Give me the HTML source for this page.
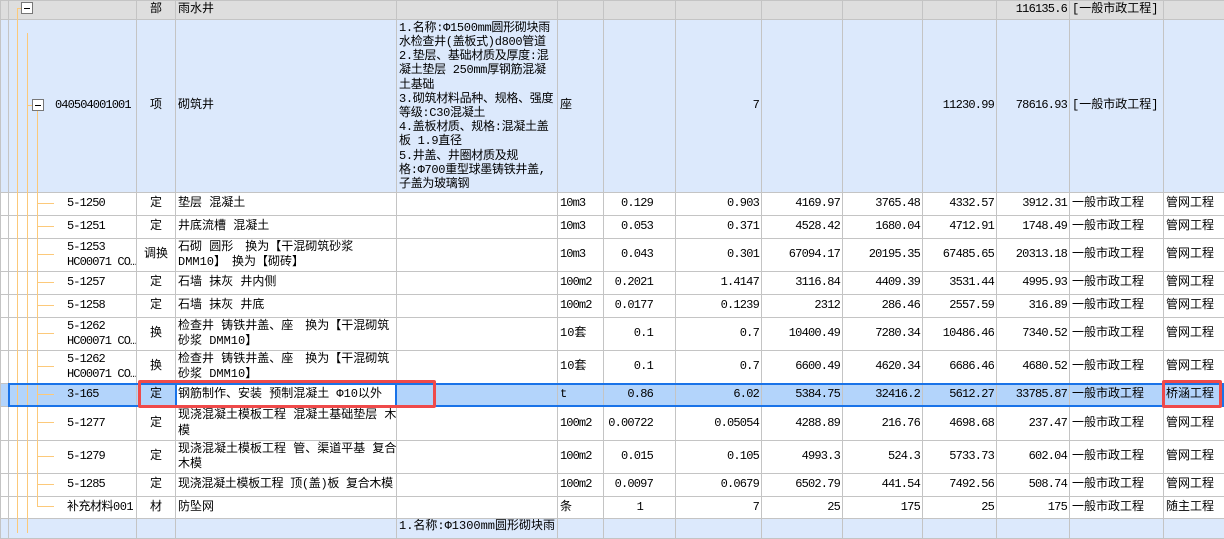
<!DOCTYPE html>
<html><head><meta charset="utf-8"><style>
*{margin:0;padding:0;box-sizing:border-box}
body{width:1224px;height:533px;overflow:hidden;background:#fff;font-family:"Liberation Mono","Noto Sans CJK SC",monospace;font-size:12px;color:#000;position:relative}
table{border-collapse:collapse;table-layout:fixed;position:absolute;left:0;top:0;width:1224px}
td{border:1px solid #c4c4c4;padding:0 2px;line-height:15.5px;vertical-align:middle;overflow:hidden;white-space:nowrap}
.r{text-align:right;letter-spacing:-0.8px}.c{text-align:center}
.k{letter-spacing:-0.9px}
.hd td{background:#dedede}
.bl td{background:#dce9fc}
.sel td{background:#b3d4fb}
.ov{position:absolute;pointer-events:none}
.p{padding-right:22px}
</style></head><body>
<table>
<colgroup><col style="width:8px"><col style="width:128px"><col style="width:39px"><col style="width:221px"><col style="width:161px"><col style="width:46px"><col style="width:72px"><col style="width:86px"><col style="width:81px"><col style="width:80px"><col style="width:74px"><col style="width:73px"><col style="width:94px"><col style="width:61px"></colgroup>
<tr class="hd" style="height:19px"><td></td><td></td><td class="c">部</td><td>雨水井</td><td></td><td></td><td></td><td></td><td></td><td></td><td></td><td class="r">116135.6</td><td>[一般市政工程]</td><td></td></tr>
<tr class="bl" style="height:173px"><td></td><td class="k" style="padding-left:46px">040504001001</td><td class="c">项</td><td>砌筑井</td><td style="line-height:14.2px;letter-spacing:-0.3px">1.名称:Φ1500mm圆形砌块雨<br>水检查井(盖板式)d800管道<br>2.垫层、基础材质及厚度:混<br>凝土垫层 250mm厚钢筋混凝<br>土基础<br>3.砌筑材料品种、规格、强度<br>等级:C30混凝土<br>4.盖板材质、规格:混凝土盖<br>板 1.9直径<br>5.井盖、井圈材质及规<br>格:Φ700重型球墨铸铁井盖,<br>子盖为玻璃钢</td><td>座</td><td></td><td class="r">7</td><td></td><td></td><td class="r">11230.99</td><td class="r">78616.93</td><td>[一般市政工程]</td><td></td></tr>
<tr style="height:23px"><td></td><td class="k" style="padding-left:58px">5-1250</td><td class="c">定</td><td>垫层 混凝土</td><td></td><td class="k">10m3</td><td class="r p">0.129</td><td class="r">0.903</td><td class="r">4169.97</td><td class="r">3765.48</td><td class="r">4332.57</td><td class="r">3912.31</td><td>一般市政工程</td><td>管网工程</td></tr>
<tr style="height:23px"><td></td><td class="k" style="padding-left:58px">5-1251</td><td class="c">定</td><td>井底流槽 混凝土</td><td></td><td class="k">10m3</td><td class="r p">0.053</td><td class="r">0.371</td><td class="r">4528.42</td><td class="r">1680.04</td><td class="r">4712.91</td><td class="r">1748.49</td><td>一般市政工程</td><td>管网工程</td></tr>
<tr style="height:33px"><td></td><td class="k" style="padding-left:58px">5-1253<br>HC00071 CO…</td><td class="c">调换</td><td>石砌 圆形　换为【干混砌筑砂浆<br>DMM10】　换为【砌砖】</td><td></td><td class="k">10m3</td><td class="r p">0.043</td><td class="r">0.301</td><td class="r">67094.17</td><td class="r">20195.35</td><td class="r">67485.65</td><td class="r">20313.18</td><td>一般市政工程</td><td>管网工程</td></tr>
<tr style="height:23px"><td></td><td class="k" style="padding-left:58px">5-1257</td><td class="c">定</td><td>石墙 抹灰 井内侧</td><td></td><td class="k">100m2</td><td class="r p">0.2021</td><td class="r">1.4147</td><td class="r">3116.84</td><td class="r">4409.39</td><td class="r">3531.44</td><td class="r">4995.93</td><td>一般市政工程</td><td>管网工程</td></tr>
<tr style="height:23px"><td></td><td class="k" style="padding-left:58px">5-1258</td><td class="c">定</td><td>石墙 抹灰 井底</td><td></td><td class="k">100m2</td><td class="r p">0.0177</td><td class="r">0.1239</td><td class="r">2312</td><td class="r">286.46</td><td class="r">2557.59</td><td class="r">316.89</td><td>一般市政工程</td><td>管网工程</td></tr>
<tr style="height:33px"><td></td><td class="k" style="padding-left:58px">5-1262<br>HC00071 CO…</td><td class="c">换</td><td>检查井 铸铁井盖、座　换为【干混砌筑<br>砂浆 DMM10】</td><td></td><td>10套</td><td class="r p">0.1</td><td class="r">0.7</td><td class="r">10400.49</td><td class="r">7280.34</td><td class="r">10486.46</td><td class="r">7340.52</td><td>一般市政工程</td><td>管网工程</td></tr>
<tr style="height:33px"><td></td><td class="k" style="padding-left:58px">5-1262<br>HC00071 CO…</td><td class="c">换</td><td>检查井 铸铁井盖、座　换为【干混砌筑<br>砂浆 DMM10】</td><td></td><td>10套</td><td class="r p">0.1</td><td class="r">0.7</td><td class="r">6600.49</td><td class="r">4620.34</td><td class="r">6686.46</td><td class="r">4680.52</td><td>一般市政工程</td><td>管网工程</td></tr>
<tr class="sel" style="height:23px"><td></td><td class="k" style="padding-left:58px">3-165</td><td class="c">定</td><td style="background:#fff">钢筋制作、安装 预制混凝土 Φ10以外</td><td></td><td>t</td><td class="r p">0.86</td><td class="r">6.02</td><td class="r">5384.75</td><td class="r">32416.2</td><td class="r">5612.27</td><td class="r">33785.87</td><td>一般市政工程</td><td>桥涵工程</td></tr>
<tr style="height:34px"><td></td><td class="k" style="padding-left:58px">5-1277</td><td class="c">定</td><td>现浇混凝土模板工程 混凝土基础垫层 木<br>模</td><td></td><td class="k">100m2</td><td class="r p">0.00722</td><td class="r">0.05054</td><td class="r">4288.89</td><td class="r">216.76</td><td class="r">4698.68</td><td class="r">237.47</td><td>一般市政工程</td><td>管网工程</td></tr>
<tr style="height:33px"><td></td><td class="k" style="padding-left:58px">5-1279</td><td class="c">定</td><td>现浇混凝土模板工程 管、渠道平基 复合<br>木模</td><td></td><td class="k">100m2</td><td class="r p">0.015</td><td class="r">0.105</td><td class="r">4993.3</td><td class="r">524.3</td><td class="r">5733.73</td><td class="r">602.04</td><td>一般市政工程</td><td>管网工程</td></tr>
<tr style="height:23px"><td></td><td class="k" style="padding-left:58px">5-1285</td><td class="c">定</td><td style="letter-spacing:-0.3px">现浇混凝土模板工程 顶(盖)板 复合木模</td><td></td><td class="k">100m2</td><td class="r p">0.0097</td><td class="r">0.0679</td><td class="r">6502.79</td><td class="r">441.54</td><td class="r">7492.56</td><td class="r">508.74</td><td>一般市政工程</td><td>管网工程</td></tr>
<tr style="height:22px"><td></td><td style="padding-left:58px;letter-spacing:-0.5px">补充材料001</td><td class="c">材</td><td>防坠网</td><td></td><td>条</td><td class="r" style="padding-right:32px">1</td><td class="r">7</td><td class="r">25</td><td class="r">175</td><td class="r">25</td><td class="r">175</td><td>一般市政工程</td><td>随主工程</td></tr>
<tr class="bl" style="height:20px"><td></td><td></td><td></td><td></td><td style="vertical-align:top">1.名称:Φ1300mm圆形砌块雨</td><td></td><td></td><td></td><td></td><td></td><td></td><td></td><td></td><td></td></tr>
</table>
<div class="ov" style="left:17px;top:8px;width:1px;height:525px;background:#fcc97a"></div>
<div class="ov" style="left:27px;top:33px;width:1px;height:500px;background:#fcc97a"></div>
<div class="ov" style="left:37px;top:110px;width:1px;height:397px;background:#fcc97a"></div>
<div class="ov" style="left:17px;top:8px;width:5px;height:1px;background:#fcc97a"></div>
<div class="ov" style="left:27px;top:105px;width:5px;height:1px;background:#fcc97a"></div>
<div class="ov" style="left:21px;top:2px;width:12px;height:12px;border:1px solid #777;background:#fff"><div style="position:absolute;left:2px;top:5px;width:6px;height:1px;background:#000"></div></div>
<div class="ov" style="left:32px;top:99px;width:12px;height:12px;border:1px solid #777;background:#fff"><div style="position:absolute;left:2px;top:5px;width:6px;height:1px;background:#000"></div></div>
<div class="ov" style="left:37px;top:203px;width:17px;height:1px;background:#fcc97a"></div>
<div class="ov" style="left:37px;top:226px;width:17px;height:1px;background:#fcc97a"></div>
<div class="ov" style="left:37px;top:254px;width:17px;height:1px;background:#fcc97a"></div>
<div class="ov" style="left:37px;top:282px;width:17px;height:1px;background:#fcc97a"></div>
<div class="ov" style="left:37px;top:305px;width:17px;height:1px;background:#fcc97a"></div>
<div class="ov" style="left:37px;top:333px;width:17px;height:1px;background:#fcc97a"></div>
<div class="ov" style="left:37px;top:366px;width:17px;height:1px;background:#fcc97a"></div>
<div class="ov" style="left:37px;top:394px;width:17px;height:1px;background:#fcc97a"></div>
<div class="ov" style="left:37px;top:422px;width:17px;height:1px;background:#fcc97a"></div>
<div class="ov" style="left:37px;top:456px;width:17px;height:1px;background:#fcc97a"></div>
<div class="ov" style="left:37px;top:484px;width:17px;height:1px;background:#fcc97a"></div>
<div class="ov" style="left:37px;top:506px;width:17px;height:1px;background:#fcc97a"></div>
<div class="ov" style="left:8px;top:383px;width:1216px;height:24px;border:2px solid #1a73e8"></div>
<div class="ov" style="left:175px;top:383px;width:222px;height:24px;border:2px solid #1a73e8"></div>
<div class="ov" style="left:138px;top:380px;width:298px;height:28px;border:3px solid #ef4a4a;border-radius:2px"></div>
<div class="ov" style="left:1162px;top:380px;width:60px;height:28px;border:3px solid #ef4a4a;border-radius:2px"></div>
</body></html>
